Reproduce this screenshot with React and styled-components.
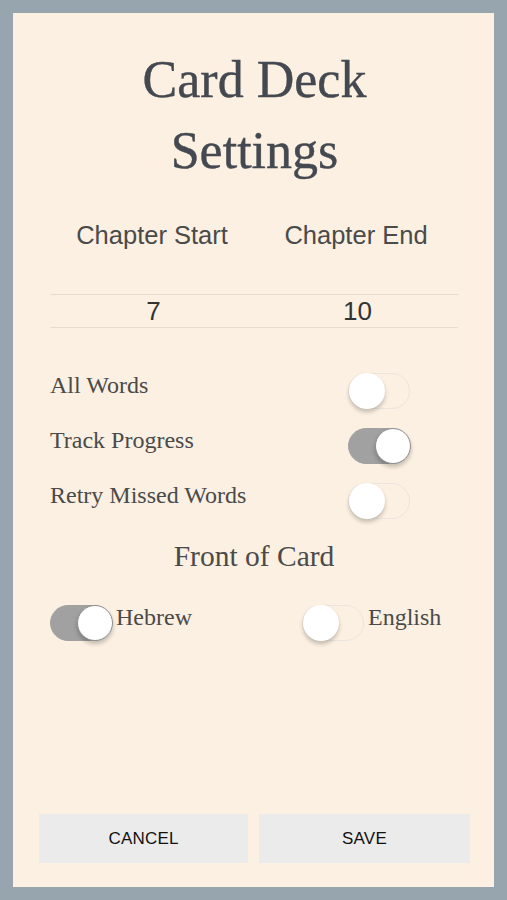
import React, { useState } from "react";
import styled, { createGlobalStyle } from "styled-components";

const Global = createGlobalStyle`
  html, body { margin: 0; padding: 0; }
  body { background: #97a5af; }
  * { box-sizing: border-box; }
`;

const Screen = styled.div`
  width: 507px;
  height: 900px;
  padding: 13px;
  background: #97a5af;
`;

const Card = styled.div`
  height: 874px;
  background: #fbf0e1;
  display: flex;
  flex-direction: column;
  padding: 31px 24px 24px 26px;
`;

const Title = styled.h1`
  margin: 0;
  font-family: "Liberation Serif", serif;
  font-weight: 400;
  font-size: 52px;
  line-height: 71px;
  color: #444951;
  text-align: center;
  -webkit-text-stroke: 0.4px #444951;
`;

const Content = styled.div`
  padding: 0 12px 0 11px;
  display: flex;
  flex-direction: column;
`;

const TwoCol = styled.div`
  display: grid;
  grid-template-columns: 1fr 1fr;
  margin-top: ${(p) => p.$mt || 0}px;
  ${(p) => p.$lined && `
    border-top: 1px solid #e4dcd0;
    border-bottom: 1px solid #e4dcd0;
    height: 34px;
    align-items: center;
  `}
`;

const SansLabel = styled.div`
  font-family: "Liberation Sans", Arial, sans-serif;
  font-size: 25.5px;
  line-height: 30px;
  color: #4a4a4a;
  text-align: center;
`;

const Value = styled.div`
  font-family: "Liberation Sans", Arial, sans-serif;
  font-size: 26px;
  line-height: 30px;
  color: #333;
  text-align: center;
  padding-left: 3px;
`;

const ToggleList = styled.div`
  display: flex;
  flex-direction: column;
  gap: 19px;
  margin-top: 45px;
`;

const ToggleRow = styled.div`
  display: grid;
  grid-template-columns: 298px 62px;
  align-items: start;
  height: 36px;
`;

const SerifLabel = styled.span`
  font-family: "Liberation Serif", serif;
  font-size: 24px;
  line-height: 28px;
  color: #4a4a4a;
  margin-top: ${(p) => p.$shift || 0}px;
`;

const Section = styled.h2`
  margin: 19px 0 0;
  font-family: "Liberation Serif", serif;
  font-weight: 400;
  font-size: 29.5px;
  line-height: 36px;
  color: #4a4a4a;
  text-align: center;
`;

const ChoiceRow = styled.div`
  display: grid;
  grid-template-columns: 252px auto;
  margin-top: 31px;
`;

const Choice = styled.div`
  display: flex;
  align-items: flex-start;
  gap: 4px;
  height: 36px;
`;

const Track = styled.button`
  position: relative;
  width: 62px;
  height: 36px;
  border-radius: 18px;
  padding: 0;
  flex: none;
  cursor: pointer;
  border: 1px solid ${(p) => (p.$on ? "#a1a1a1" : "#ebe5de")};
  background: ${(p) => (p.$on ? "#a1a1a1" : "transparent")};
`;

const Knob = styled.span`
  position: absolute;
  top: -1px;
  left: ${(p) => (p.$on ? "26px" : "0px")};
  width: 36px;
  height: 36px;
  border-radius: 50%;
  background: #fff;
  border: ${(p) => (p.$on ? "1.5px solid #8e8e8e" : "none")};
  box-shadow: 0 3px 4px rgba(0, 0, 0, 0.22);
`;

const Footer = styled.div`
  margin-top: auto;
  display: grid;
  grid-template-columns: 209px 211px;
  gap: 11px;
`;

const Button = styled.button`
  height: 49px;
  border: none;
  background: #ebebeb;
  font-family: "Liberation Sans", Arial, sans-serif;
  font-size: 17px;
  color: #111;
  letter-spacing: 0.2px;
`;

function Switch({ on, onToggle }) {
  return (
    <Track $on={on} onClick={onToggle} aria-pressed={on}>
      <Knob $on={on} />
    </Track>
  );
}

export default function App() {
  const [all, setAll] = useState(false);
  const [track, setTrack] = useState(true);
  const [retry, setRetry] = useState(false);
  const [front, setFront] = useState("hebrew");

  return (
    <>
      <Global />
      <Screen>
        <Card>
          <Title>
            Card Deck
            <br />
            Settings
          </Title>
          <Content>
            <TwoCol $mt={34}>
              <SansLabel>Chapter Start</SansLabel>
              <SansLabel>Chapter End</SansLabel>
            </TwoCol>
            <TwoCol $mt={44} $lined>
              <Value>7</Value>
              <Value>10</Value>
            </TwoCol>
            <ToggleList>
              <ToggleRow>
                <SerifLabel $shift={-2}>All Words</SerifLabel>
                <Switch on={all} onToggle={() => setAll(!all)} />
              </ToggleRow>
              <ToggleRow>
                <SerifLabel $shift={-2}>Track Progress</SerifLabel>
                <Switch on={track} onToggle={() => setTrack(!track)} />
              </ToggleRow>
              <ToggleRow>
                <SerifLabel $shift={-2}>Retry Missed Words</SerifLabel>
                <Switch on={retry} onToggle={() => setRetry(!retry)} />
              </ToggleRow>
            </ToggleList>
            <Section>Front of Card</Section>
            <ChoiceRow>
              <Choice>
                <Switch on={front === "hebrew"} onToggle={() => setFront("hebrew")} />
                <SerifLabel $shift={-2}>Hebrew</SerifLabel>
              </Choice>
              <Choice>
                <Switch on={front === "english"} onToggle={() => setFront("english")} />
                <SerifLabel $shift={-2}>English</SerifLabel>
              </Choice>
            </ChoiceRow>
          </Content>
          <Footer>
            <Button>CANCEL</Button>
            <Button>SAVE</Button>
          </Footer>
        </Card>
      </Screen>
    </>
  );
}
